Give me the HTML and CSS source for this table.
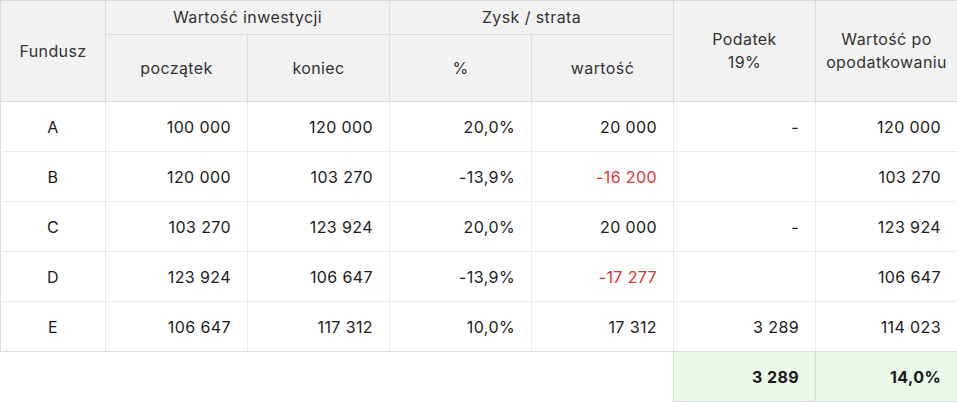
FILE: index.html
```html
<!DOCTYPE html>
<html lang="pl">
<head>
  <meta charset="UTF-8">
  <title>Podatek od zysków z funduszy</title>
  <link rel="stylesheet" href="styles.css">
</head>
<body>
  <table class="tax-table">
    <colgroup>
      <col class="col-name">
      <col span="6" class="col-num">
    </colgroup>
    <thead>
      <tr class="head-top">
        <th rowspan="2">Fundusz</th>
        <th colspan="2">Wartość inwestycji</th>
        <th colspan="2">Zysk / strata</th>
        <th rowspan="2">Podatek<br>19%</th>
        <th rowspan="2">Wartość po<br>opodatkowaniu</th>
      </tr>
      <tr class="head-sub">
        <th>początek</th>
        <th>koniec</th>
        <th>%</th>
        <th>wartość</th>
      </tr>
    </thead>
    <tbody>
      <tr>
        <td class="name">A</td>
        <td>100 000</td>
        <td>120 000</td>
        <td>20,0%</td>
        <td>20 000</td>
        <td>-</td>
        <td>120 000</td>
      </tr>
      <tr>
        <td class="name">B</td>
        <td>120 000</td>
        <td>103 270</td>
        <td>-13,9%</td>
        <td class="loss">-16 200</td>
        <td></td>
        <td>103 270</td>
      </tr>
      <tr>
        <td class="name">C</td>
        <td>103 270</td>
        <td>123 924</td>
        <td>20,0%</td>
        <td>20 000</td>
        <td>-</td>
        <td>123 924</td>
      </tr>
      <tr>
        <td class="name">D</td>
        <td>123 924</td>
        <td>106 647</td>
        <td>-13,9%</td>
        <td class="loss">-17 277</td>
        <td></td>
        <td>106 647</td>
      </tr>
      <tr>
        <td class="name">E</td>
        <td>106 647</td>
        <td>117 312</td>
        <td>10,0%</td>
        <td>17 312</td>
        <td>3 289</td>
        <td>114 023</td>
      </tr>
    </tbody>
    <tfoot>
      <tr>
        <td colspan="5" class="blank"></td>
        <td class="total">3 289</td>
        <td class="total">14,0%</td>
      </tr>
    </tfoot>
  </table>
</body>
</html>
```

FILE: styles.css
```css
body {
  margin: 0;
  background-color: #fff;
  font-family: Inter, 'Open Sans', sans-serif;
  color: #1a1a1a;
}
.tax-table {
  border-collapse: collapse;
  table-layout: fixed;
  width: 958px;
  font-size: 16px;
  letter-spacing: 0.4px;
}
.col-name {
  width: 105px;
}
.col-num {
  width: 142px;
}
.tax-table th {
  background-color: #f2f2f2;
  border: 1px solid #dcdcdc;
  font-weight: 400;
  color: #333;
  line-height: 23px;
  padding: 0 4px;
  text-align: center;
}
.head-top th {
  height: 33px;
}
.head-sub th {
  height: 66px;
}
.tax-table td {
  height: 49px;
  padding: 0 16px;
  border: 1px solid #ececec;
  text-align: right;
}
.tax-table tbody tr:last-child td {
  border-bottom-color: #dcdcdc;
}
.tax-table tbody td:first-child {
  border-left-color: #dcdcdc;
}
.tax-table td.name {
  text-align: center;
}
.tax-table td.loss {
  color: #e03434;
}
.tax-table td.blank {
  border: none;
  border-top: 1px solid #dcdcdc;
}
.tax-table td.total {
  background-color: #e9f9e9;
  border: 1px solid #d6dcd6;
  font-weight: 700;
}
```
